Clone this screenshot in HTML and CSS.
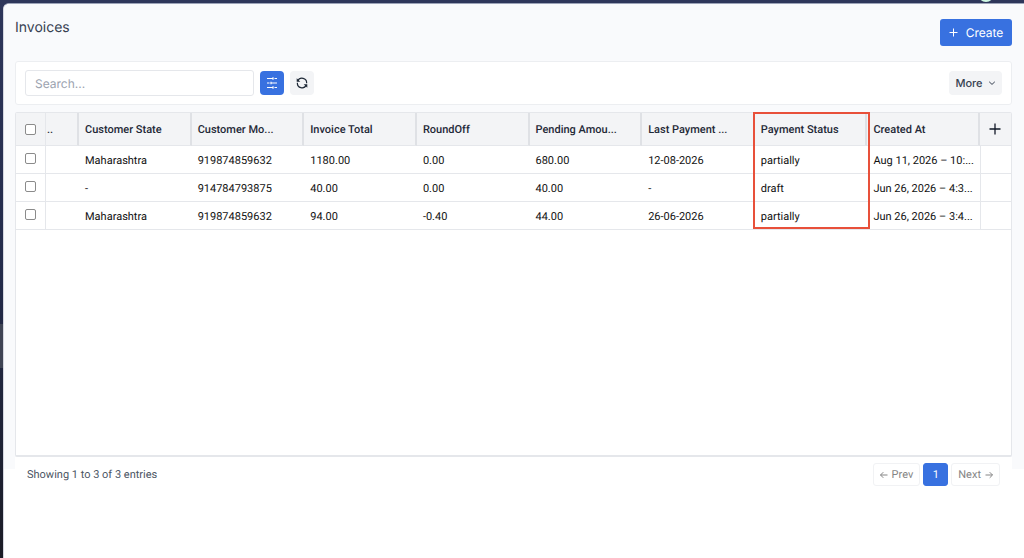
FILE: index.html
```html
<!DOCTYPE html>
<html lang="en">
<head>
<meta charset="utf-8">
<meta name="viewport" content="width=device-width, initial-scale=1">
<title>Invoices</title>
<link rel="stylesheet" href="styles.css">
</head>
<body class="app">
<div class="topbar"><span class="avatar"></span></div>
<aside class="rail"><span class="rail-active"></span></aside>
<main class="page">
  <section class="workspace">
    <header class="page-head">
      <h1 class="title">Invoices</h1>
      <button class="btn-create" type="button">
        <svg width="9" height="9" viewBox="0 0 9 9" fill="none" stroke="currentColor" stroke-width="1" aria-hidden="true"><path d="M4.5 .5v8M.5 4.5h8"/></svg>
        Create
      </button>
    </header>
    <div class="toolbar">
      <input class="search" type="text" placeholder="Search..." aria-label="Search">
      <button class="icon-btn icon-btn-primary" type="button" aria-label="Filters">
        <svg width="12" height="12" viewBox="0 0 12 12" fill="none" stroke="currentColor" stroke-width="1" aria-hidden="true"><path d="M1 1.500h6M8.500 1.500H11M1 6h2.500M5 6h6M1 10.500h6M8.500 10.500H11"/><path d="M7 .2v2.600M5 4.700v2.600M7 9.200v2.600" stroke-width="1.200"/></svg>
      </button>
      <button class="icon-btn" type="button" aria-label="Refresh">
        <svg width="12" height="12" viewBox="0 0 12 12" fill="none" stroke="currentColor" stroke-width="1.200" aria-hidden="true"><path d="M1.800 4A4.600 4.600 0 0 1 10.600 6.200M10.200 8A4.600 4.600 0 0 1 1.400 5.800"/><path d="M.7 1.200v3.600h3.600zM11.300 10.800V7.200H7.700z" fill="currentColor" stroke="none"/></svg>
      </button>
      <button class="btn-more" type="button">More
        <svg width="8" height="8" viewBox="0 0 8 8" fill="none" stroke="currentColor" stroke-width="1" aria-hidden="true"><path d="M1.200 2.800 4 5.400l2.800-2.600"/></svg>
      </button>
    </div>
    <div class="grid">
      <table class="table">
        <colgroup><col class="col-check"><col class="col-edge"><col><col><col><col><col><col><col><col><col class="col-add"></colgroup>
        <thead>
          <tr>
            <th class="check"><input type="checkbox" aria-label="Select all"></th>
            <th class="edge">..</th>
            <th>Customer State</th>
            <th>Customer Mo...</th>
            <th>Invoice Total</th>
            <th>RoundOff</th>
            <th>Pending Amou...</th>
            <th>Last Payment ...</th>
            <th class="marked">Payment Status<span class="marker"></span></th>
            <th>Created At</th>
            <th class="add"><button class="btn-add" type="button" aria-label="Add column"><svg width="12" height="12" viewBox="0 0 12 12" fill="none" stroke="currentColor" stroke-width="1.300" aria-hidden="true"><path d="M6 .5v11M.5 6h11"/></svg></button></th>
          </tr>
        </thead>
        <tbody>
          <tr><td class="check"><input type="checkbox" aria-label="Select row 1"></td><td></td><td>Maharashtra</td><td>919874859632</td><td>1180.00</td><td>0.00</td><td>680.00</td><td>12-08-2026</td><td>partially</td><td>Aug 11, 2026 – 10:...</td><td class="last"></td></tr>
          <tr><td class="check"><input type="checkbox" aria-label="Select row 2"></td><td></td><td>-</td><td>914784793875</td><td>40.00</td><td>0.00</td><td>40.00</td><td>-</td><td>draft</td><td>Jun 26, 2026 – 4:3...</td><td class="last"></td></tr>
          <tr><td class="check"><input type="checkbox" aria-label="Select row 3"></td><td></td><td>Maharashtra</td><td>919874859632</td><td>94.00</td><td>-0.40</td><td>44.00</td><td>26-06-2026</td><td>partially</td><td>Jun 26, 2026 – 3:4...</td><td class="last"></td></tr>
        </tbody>
      </table>
    </div>
  </section>
  <footer class="footer">
    <span>Showing 1 to 3 of 3 entries</span>
    <nav class="pager" aria-label="Pagination">
      <button class="page-btn" type="button"><svg width="8" height="8" viewBox="0 0 8 8" fill="none" stroke="currentColor" stroke-width="1" aria-hidden="true"><path d="M7.500 4h-7M3.300 1.200.5 4l2.800 2.800"/></svg>Prev</button>
      <button class="page-btn page-current" type="button" aria-current="page">1</button>
      <button class="page-btn" type="button">Next<svg width="8" height="8" viewBox="0 0 8 8" fill="none" stroke="currentColor" stroke-width="1" aria-hidden="true"><path d="M.5 4h7M4.700 1.200 7.500 4 4.700 6.800"/></svg></button>
    </nav>
  </footer>
</main>
</body>
</html>
```
FILE: styles.css
```css
* { box-sizing: border-box; }

.app {
  margin: 0;
  min-height: 100vh;
  display: grid;
  grid-template-columns: 3px 1fr;
  grid-template-rows: 3px 1fr;
  background: #2e365a;
  color: #1f2937;
  font-family: Inter, "Liberation Sans", sans-serif;
  font-size: 11px;
  text-rendering: geometricPrecision;
}

button, input { font: inherit; margin: 0; text-rendering: inherit; }
button { border: 0; padding: 0; display: inline-flex; align-items: center; justify-content: center; }
svg { display: block; flex: none; }

.topbar {
  grid-column: 1 / -1;
  display: flex;
  justify-content: flex-end;
  padding-right: 30px;
  overflow: hidden;
}
.avatar { width: 16px; height: 16px; margin-top: -14px; border-radius: 50%; background: #d1fae5; }

.rail { background: linear-gradient(#2e365a, #232b4a 50%, #1b1c26); padding-top: 321px; }
.rail-active { display: block; height: 44px; background: #3f4454; }

.page {
  min-width: 0;
  display: flex;
  flex-direction: column;
  border-top: 1px solid #9ca3b8;
  border-left: 1px solid #d5d7e0;
  border-radius: 6px 0 0 0;
  background: #fff;
  overflow: hidden;
}
.workspace {
  flex: 1;
  display: flex;
  flex-direction: column;
  padding: 14px 12px 12px 11px;
  background: #f9fafc;
}

.page-head { display: flex; justify-content: space-between; align-items: flex-start; margin-bottom: 15px; }
.title { margin: 0; font-size: 14px; line-height: 19px; font-weight: 400; color: #374151; }
.btn-create {
  width: 72px;
  height: 27px;
  margin-top: 1px;
  gap: 8px;
  border-radius: 3px;
  background: #3871e0;
  color: #fff;
  font-size: 12px;
}

.toolbar {
  display: flex;
  align-items: center;
  gap: 6px;
  height: 44px;
  margin-bottom: 7px;
  padding: 0 9px;
  border: 1px solid #eceef1;
  border-radius: 3px;
  background: #fff;
}
.search {
  width: 229px;
  height: 26px;
  padding: 0 9px;
  border: 1px solid #e5e7eb;
  border-radius: 3px;
  background: #fff;
  font-size: 12px;
}
.search::placeholder { color: #9ca3af; }
.icon-btn { width: 24px; height: 24px; border-radius: 4px; background: #f3f4f6; color: #1f2937; }
.icon-btn-primary { background: #3871e0; color: #fff; }
.btn-more { width: 53px; height: 24px; margin-left: auto; gap: 5px; border-radius: 4px; background: #f3f4f6; color: #374151; font-weight: 500; }

.grid { flex: 1; border: 1px solid #e5e7eb; border-bottom-width: 2px; border-radius: 2px; background: #fff; }
.table { width: 100%; table-layout: fixed; border-collapse: separate; border-spacing: 0; font-family: Roboto, "Liberation Sans", sans-serif; }
.col-check { width: 30px; }
.col-edge { width: 33px; }
.col-add { width: 31px; }
.table th {
  height: 33px;
  padding: 0 0 0 6px;
  border-right: 2px solid #dfe1e5;
  border-bottom: 1px solid #e5e7eb;
  background: #f3f4f6;
  text-align: left;
  font-weight: 500;
  white-space: nowrap;
}
.table td {
  height: 28px;
  padding: 2px 0 0 6px;
  border-bottom: 1px solid #e5e7eb;
  color: #111;
  white-space: nowrap;
}
.table .check { padding: 0 0 0 9px; border-right: 1px solid #e5e7eb; }
.table td.check { padding-bottom: 2px; }
.table .edge { padding-left: 1px; }
.table .add { padding: 0 0 0 9px; border-right: 0; }
.table .last { border-left: 1px solid #e5e7eb; }
.check input {
  display: block;
  appearance: none;
  width: 11px;
  height: 11px;
  border: 1px solid #8b8b8b;
  border-radius: 2px;
  background: #fff;
}
.btn-add { display: flex; background: none; color: #111827; }
.table .marked { position: relative; }
.marker {
  position: absolute;
  top: -1px;
  left: -2px;
  width: 117px;
  height: 117px;
  border: 2px solid #e8503a;
  pointer-events: none;
}

.footer {
  display: flex;
  justify-content: space-between;
  align-items: flex-start;
  min-height: 101px;
  margin: -12px 12px 0 11px;
  padding: 6px 12px;
  background: #fff;
  color: #4b5563;
  font-family: Roboto, "Liberation Sans", sans-serif;
  line-height: 24px;
}
.pager { display: flex; gap: 3px; }
.page-btn {
  height: 23px;
  padding: 0 6px;
  gap: 4px;
  border: 1px solid #f1f2f4;
  border-radius: 3px;
  background: #fff;
  color: #858585;
}
.page-current { width: 25px; border-color: #3871e0; background: #3871e0; color: #fff; }
```
